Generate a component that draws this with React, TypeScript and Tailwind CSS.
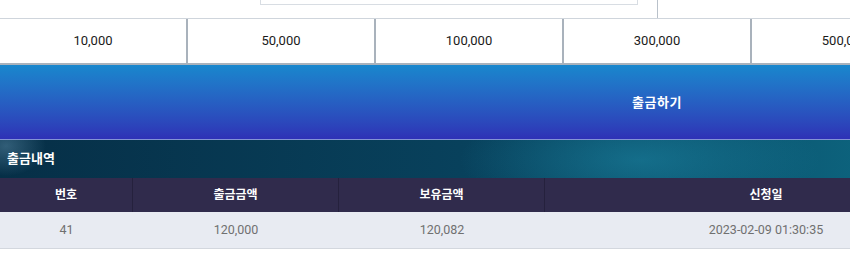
import React from "react";

const amounts = ["10,000", "50,000", "100,000", "300,000", "500,000", "1,000,000", "정정"];

export default function App() {
  const font = { fontFamily: 'Roboto, "Noto Sans CJK KR", sans-serif' };
  return (
    <div className="w-[850px] h-[259px] overflow-hidden bg-white" style={font}>
      <div className="w-[1314px]">
        {/* top input remnant */}
        <div className="h-[19px] flex border-b border-[#cfd5dc]">
          <div className="w-[260px]" />
          <div className="w-[378px] h-[5px] border border-t-0 border-[#d8dde3]" />
          <div className="w-[19px]" />
          <div className="w-px h-full bg-[#b9c1ca]" />
        </div>
        {/* amount buttons */}
        <div className="flex h-[46px] border-b-2 border-[#a9b2bc]">
          {amounts.map((a, i) => (
            <div
              key={i}
              className={`${i === 0 ? "w-[186px]" : "w-[188px] border-l-2 border-[#a9b2bc]"} h-full flex items-center justify-center text-[13px] text-[#1a1a1a] bg-white`}
            >
              {a}
            </div>
          ))}
        </div>
        {/* withdraw button */}
        <div className="h-[75px] flex items-center justify-center bg-gradient-to-b from-[#1887cd] to-[#2e31b6] border-b border-[#8394d4]">
          <span className="text-white font-bold text-[13px] tracking-[0.5px] pt-[2px]">출금하기</span>
        </div>
        {/* history title */}
        <div
          className="h-[38px] flex items-center pl-[7px]"
          style={{
            background:
              "radial-gradient(ellipse 40px 30px at 6px 6px, rgba(130,180,210,0.35), transparent), radial-gradient(ellipse 180px 60px at 640px 20px, rgba(30,140,170,0.5), transparent), linear-gradient(to right, #062f47 0%, #08415c 35%, #0b5570 55%, #0d6680 68%, #0a5470 80%, #063e58 92%, #063147 100%)",
          }}
        >
          <span className="text-white font-bold text-[13px]">출금내역</span>
        </div>
        {/* table header */}
        <div className="flex h-[34px] bg-[#302b4c] text-white font-bold text-[12px]">
          <div className="w-[133px] flex items-center justify-center border-r border-[#25213d]">번호</div>
          <div className="w-[206px] flex items-center justify-center border-r border-[#25213d]">출금금액</div>
          <div className="w-[206px] flex items-center justify-center border-r border-[#25213d]">보유금액</div>
          <div className="w-[442px] flex items-center justify-center">신청일</div>
        </div>
        {/* row */}
        <div className="flex h-[37px] bg-[#e8ebf2] text-[#707070] text-[12.5px] border-b border-[#d3d7de]">
          <div className="w-[133px] flex items-center justify-center">41</div>
          <div className="w-[206px] flex items-center justify-center">120,000</div>
          <div className="w-[206px] flex items-center justify-center">120,082</div>
          <div className="w-[442px] flex items-center justify-center">2023-02-09 01:30:35</div>
        </div>
      </div>
    </div>
  );
}
